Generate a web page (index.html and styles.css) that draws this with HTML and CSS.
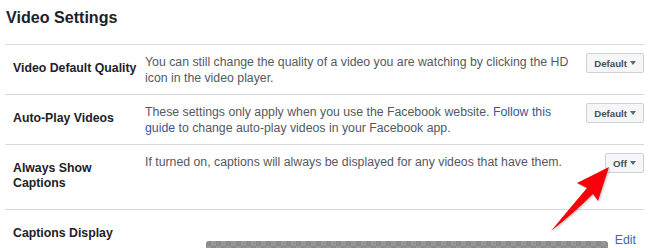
FILE: index.html
```html
<!DOCTYPE html>
<html lang="en">
<head>
    <meta charset="UTF-8">
    <title>Video Settings</title>
    <link rel="stylesheet" href="styles.css">
</head>
<body>
    <div class="page">
        <h1 class="title">Video Settings</h1>
        <ul class="settings">
            <li class="row">
                <div class="label">Video Default Quality</div>
                <div class="desc">You can still change the quality of a video you are watching by clicking the HD icon in the video player.</div>
                <div class="action"><span class="btn">Default<i class="caret"></i></span></div>
            </li>
            <li class="row">
                <div class="label">Auto-Play Videos</div>
                <div class="desc">These settings only apply when you use the Facebook website. <a href="#">Follow this</a> <a href="#">guide</a> to change auto-play videos in your Facebook app.</div>
                <div class="action"><span class="btn">Default<i class="caret"></i></span></div>
            </li>
            <li class="row">
                <div class="label">Always Show Captions</div>
                <div class="desc">If turned on, captions will always be displayed for any videos that have them.</div>
                <div class="action"><span class="btn">Off<i class="caret"></i></span></div>
            </li>
            <li class="row">
                <div class="label">Captions Display</div>
                <div class="desc"><div class="preview"></div></div>
                <div class="action"><a href="#" class="edit">Edit</a></div>
            </li>
        </ul>

        <!-- callout arrow pointing at the Off button -->
        <svg class="callout" width="80" height="80" viewBox="540 160 80 80">
            <path d="M609 167 L577 183 L587 188 Q570 208 551 231 Q574 213 593 194 L598 201 Z" fill="#f7000b"/>
        </svg>
    </div>
</body>
</html>
```

FILE: styles.css
```css
html,body{
    margin:0;
    overflow: hidden;
}
body{
    font-family: "Liberation Sans", Arial, sans-serif;
    color: #1d2129;
    background: #fff;
}
ul{
    margin: 0;
    padding-left: 0;
    list-style: none;
}
a{
    color: #365899;
    text-decoration: none;
}
.page{
    position: relative;
    padding: 0 6px 0 5px;
}
.title{
    margin: 0;
    padding: 7px 0 17px 1px;
    font-size: 16.1px;
    line-height: 20px;
    font-weight: bold;
}
.row{
    display: flex;
    align-items: flex-start;
    border-top: 1px solid #d6d8dc;
}
.label{
    box-sizing: border-box;
    flex: none;
    width: 140px;
    padding: 16px 4px 18px 8px;
    font-size: 12.3px;
    line-height: 15px;
    font-weight: bold;
}
.desc{
    flex: none;
    width: 432px;
    padding-top: 9px;
    font-size: 12.3px;
    line-height: 16px;
    color: #55595f;
}
.action{
    margin-left: auto;
    padding-top: 8px;
}
.btn{
    display: flex;
    align-items: center;
    height: 18px;
    padding: 0 7px;
    border: 1px solid #cdd0d5;
    border-radius: 2px;
    background-color: #f5f6f7;
    color: #4b4f56;
    font-size: 9.7px;
    font-weight: bold;
}
.caret{
    width: 0;
    height: 0;
    margin-left: 3px;
    border-left: 3.5px solid transparent;
    border-right: 3.5px solid transparent;
    border-top: 4px solid #606770;
}
.edit{
    display: block;
    margin: 14px 8px 0 0;
    font-size: 12.3px;
    line-height: 16px;
    color: #4267b2;
}
.preview{
    width: 402px;
    height: 40px;
    margin: 22px 0 0 61px;
    border-radius: 3px 3px 0 0;
    background-color: #8c8c8c;
    background-image: repeating-conic-gradient(#979797 0 25%, #8a8a8a 0 50%);
    background-size: 10px 10px;
}
.callout{
    position: absolute;
    left: 540px;
    top: 160px;
    filter: drop-shadow(1px 1px 1px rgba(0,0,0,0.25));
}
```
